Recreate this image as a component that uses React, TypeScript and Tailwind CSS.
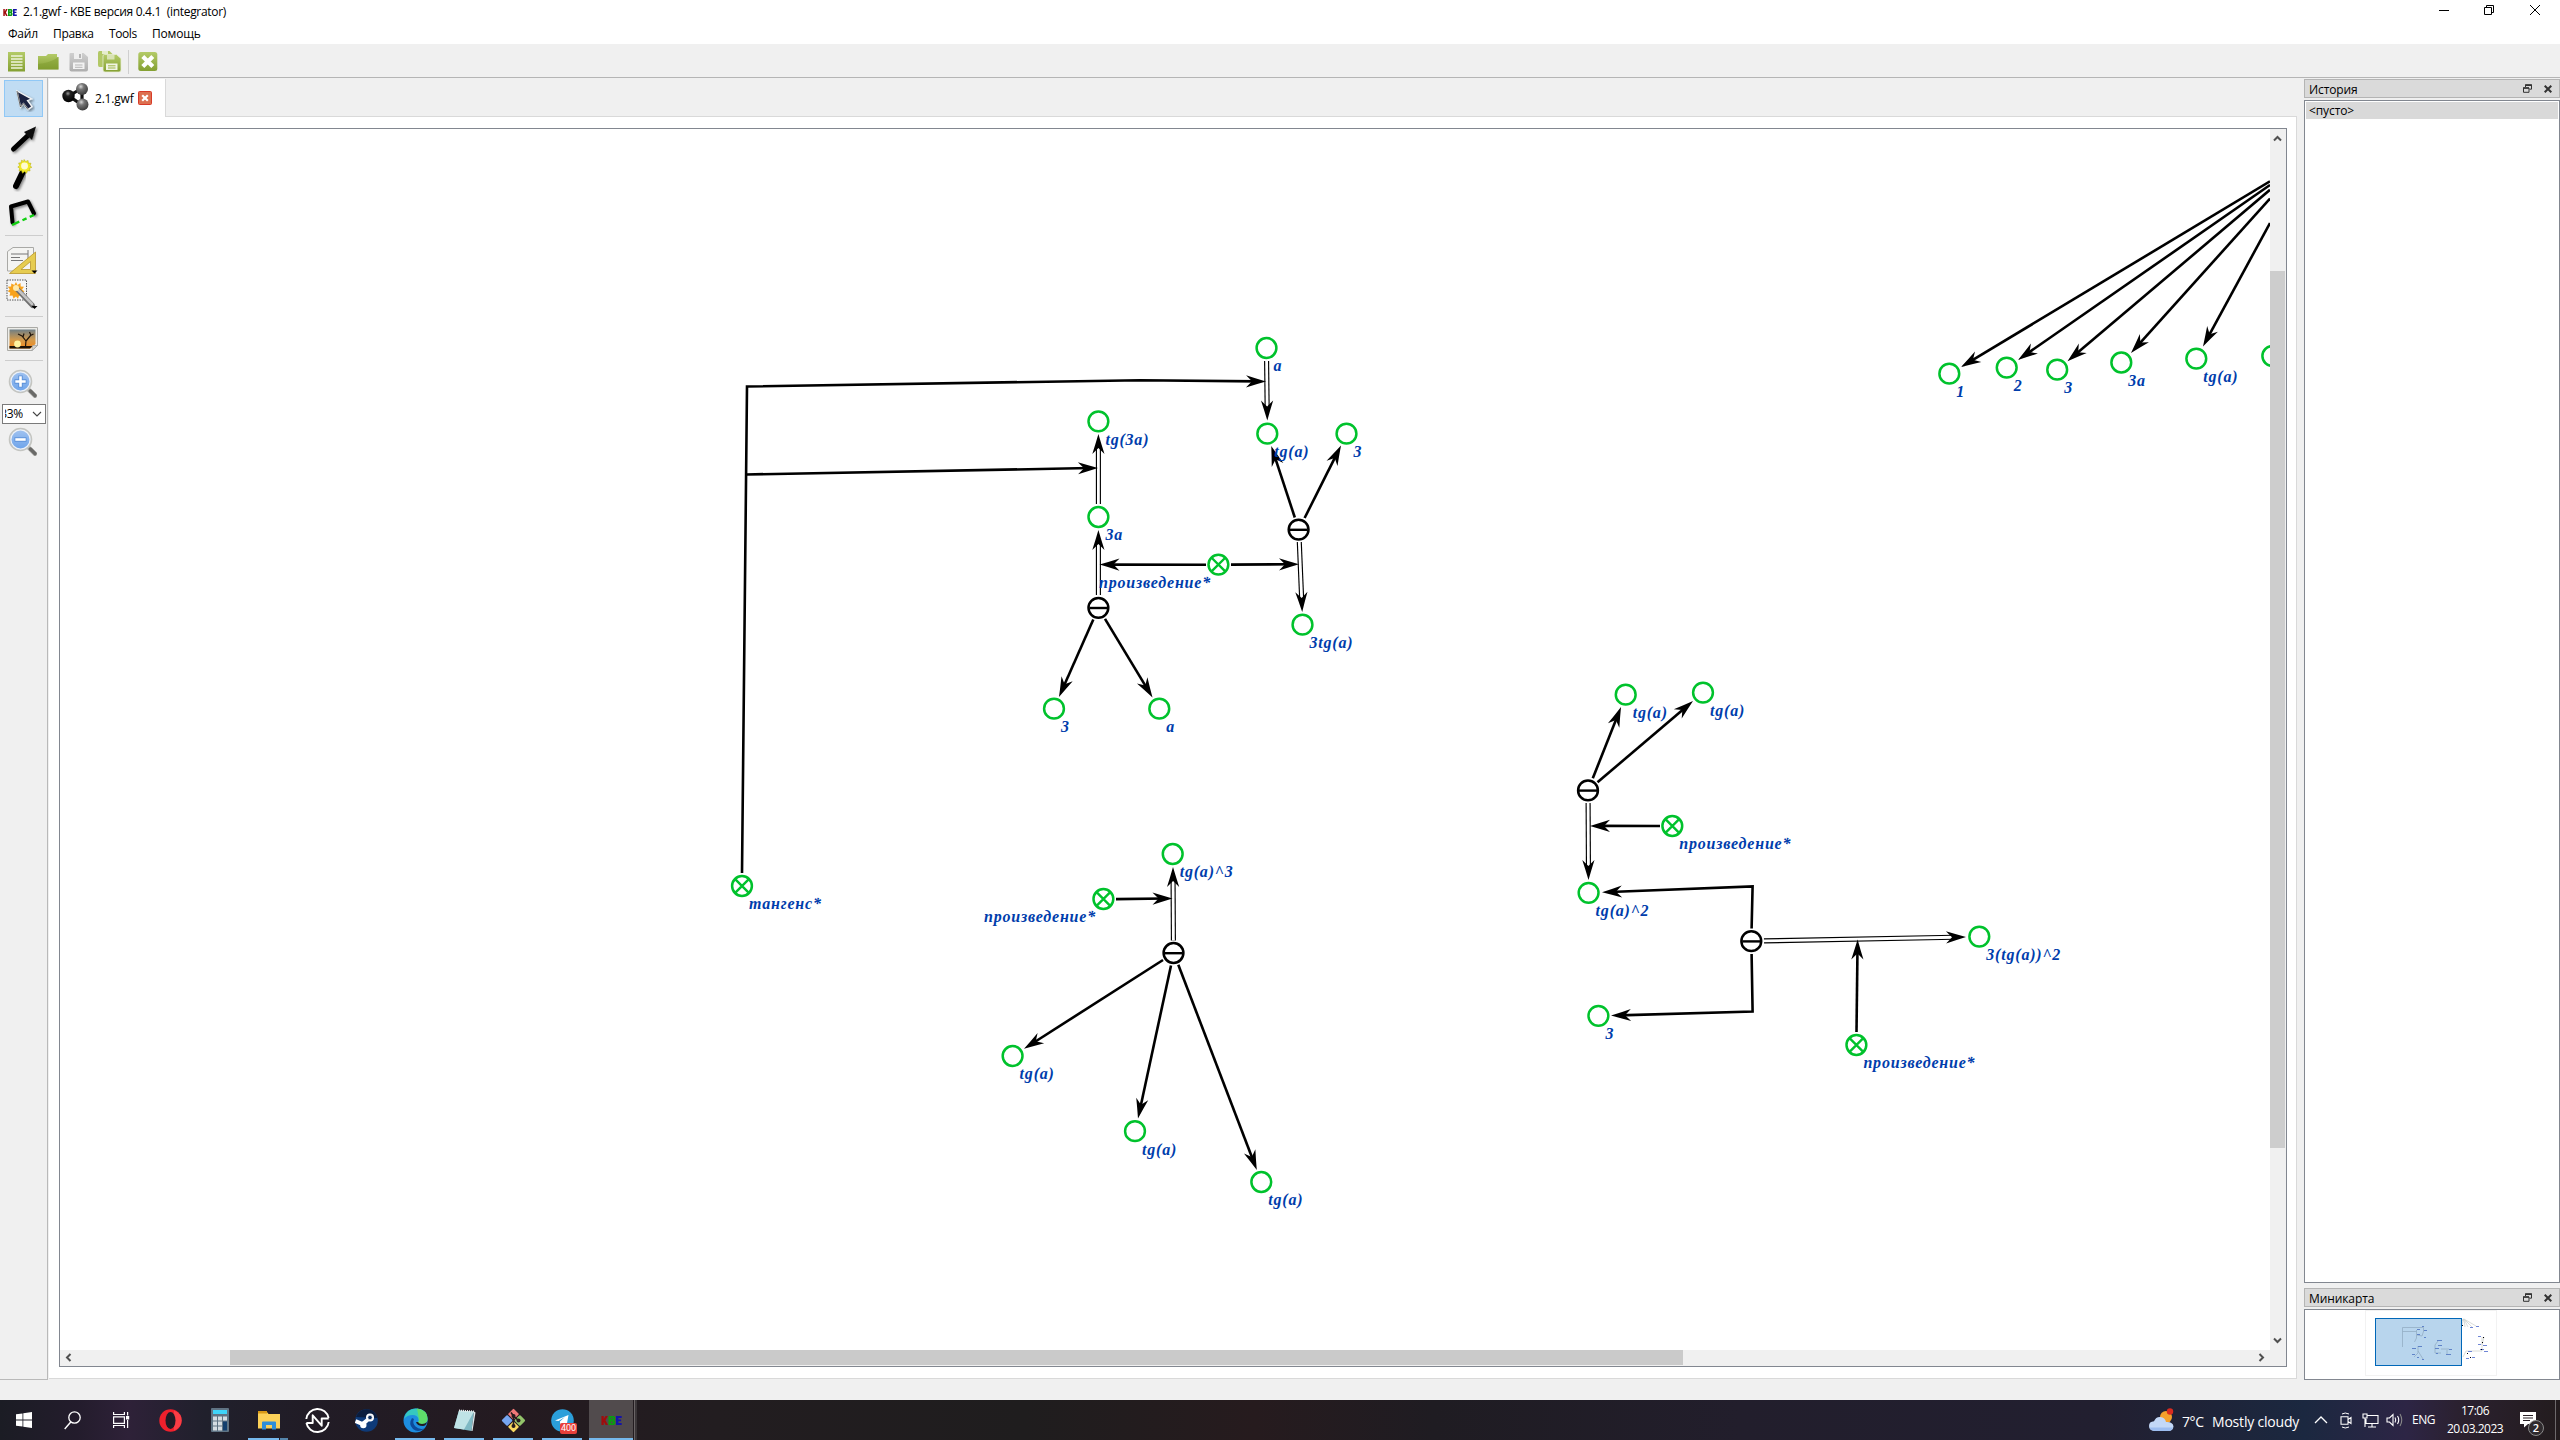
import React from "react";

type Pt = [number, number];

const UI = "font-['Open_Sans','Noto_Sans',sans-serif]";

/* ---------- Diagram data (canvas viewport origin is the window origin) ---------- */

type Kind = "node" | "relation" | "tuple";
interface GraphNode {
  x: number;
  y: number;
  kind: Kind;
  label?: string;
  left?: boolean;
}

const nodes: GraphNode[] = [
  { x: 1266.5, y: 348, kind: "node", label: "a" },
  { x: 1267.3, y: 433.7, kind: "node", label: "tg(a)" },
  { x: 1346.5, y: 433.7, kind: "node", label: "3" },
  { x: 1298.6, y: 529.6, kind: "tuple" },
  { x: 1302.5, y: 624.7, kind: "node", label: "3tg(a)" },
  { x: 1218.4, y: 564.6, kind: "relation", label: "произведение*", left: true },
  { x: 1098.4, y: 421.3, kind: "node", label: "tg(3a)" },
  { x: 1098.4, y: 517, kind: "node", label: "3a" },
  { x: 1098.4, y: 607.8, kind: "tuple" },
  { x: 1054, y: 708.7, kind: "node", label: "3" },
  { x: 1159.3, y: 708.7, kind: "node", label: "a" },
  { x: 742, y: 886, kind: "relation", label: "тангенс*" },
  { x: 1172.7, y: 854, kind: "node", label: "tg(a)^3" },
  { x: 1103.4, y: 899, kind: "relation", label: "произведение*", left: true },
  { x: 1173.5, y: 953, kind: "tuple" },
  { x: 1012.6, y: 1056, kind: "node", label: "tg(a)" },
  { x: 1135, y: 1131.2, kind: "node", label: "tg(a)" },
  { x: 1261.3, y: 1182, kind: "node", label: "tg(a)" },
  { x: 1625.7, y: 694.7, kind: "node", label: "tg(a)" },
  { x: 1703, y: 692.6, kind: "node", label: "tg(a)" },
  { x: 1588, y: 790.4, kind: "tuple" },
  { x: 1672.3, y: 826, kind: "relation", label: "произведение*" },
  { x: 1588.6, y: 892.8, kind: "node", label: "tg(a)^2" },
  { x: 1751.3, y: 941.2, kind: "tuple" },
  { x: 1979.3, y: 936.6, kind: "node", label: "3(tg(a))^2" },
  { x: 1598.4, y: 1015.8, kind: "node", label: "3" },
  { x: 1856.4, y: 1045, kind: "relation", label: "произведение*" },
  { x: 1949.3, y: 373.7, kind: "node", label: "1" },
  { x: 2006.7, y: 367.6, kind: "node", label: "2" },
  { x: 2057.2, y: 369.7, kind: "node", label: "3" },
  { x: 2121.3, y: 362.5, kind: "node", label: "3a" },
  { x: 2196.3, y: 358.6, kind: "node", label: "tg(a)" },
  { x: 2272.3, y: 356, kind: "node" },
];

/* The last point of every path carries the arrow head. */
const solid: Pt[][] = [
  [[742, 873], [747, 386.5], [1140, 380.2], [1266, 381.5]],
  [[746.3, 474.5], [1098, 467.9]],
  [[1206, 564.7], [1099.5, 564.6]],
  [[1231, 564.6], [1299, 564.2]],
  [[1294.8, 517.5], [1271.3, 446]],
  [[1304.6, 518], [1341, 445.5]],
  [[1093.3, 619.5], [1059, 697]],
  [[1105, 618.8], [1152.5, 697.5]],
  [[1116, 899.1], [1172.5, 898.4]],
  [[1163, 960], [1024, 1048.8]],
  [[1171, 965.5], [1138, 1118.5]],
  [[1178.3, 964.8], [1256.8, 1170]],
  [[1592.8, 778.3], [1621, 707]],
  [[1597.5, 782.3], [1693, 701]],
  [[1660, 826], [1590, 825.9]],
  [[1751.6, 928.5], [1752.6, 886.4], [1602, 892.3]],
  [[1751.6, 954], [1752.6, 1011.5], [1611, 1015.6]],
  [[1856.5, 1032], [1857.6, 939.5]],
  [[2270, 181.3], [1961, 367]],
  [[2270, 185], [2018, 360]],
  [[2270, 189.8], [2067.5, 361.2]],
  [[2270, 198.6], [2131, 353]],
  [[2270, 223], [2203, 346.5]],
];

const double: [Pt, Pt][] = [
  [[1266.6, 361], [1267.3, 420.5]],
  [[1098.4, 504], [1098.4, 434]],
  [[1098.4, 595], [1098.4, 530]],
  [[1299.3, 542], [1302.2, 612]],
  [[1173.4, 940.5], [1173, 867]],
  [[1588.1, 803], [1588.5, 880]],
  [[1764, 940.9], [1966, 937]],
];

function Head({ from, to }: { from: Pt; to: Pt }) {
  const angle = (Math.atan2(to[1] - from[1], to[0] - from[0]) * 180) / Math.PI;
  return (
    <path
      d="M0 0 Q-10 -2.9 -20 -6.1 L-14 0 L-20 6.1 Q-10 2.9 0 0Z"
      fill="#000"
      transform={`translate(${to[0]} ${to[1]}) rotate(${angle})`}
    />
  );
}

function shorten(from: Pt, to: Pt, by: number): Pt {
  const d = Math.hypot(to[0] - from[0], to[1] - from[1]);
  return [to[0] - ((to[0] - from[0]) * by) / d, to[1] - ((to[1] - from[1]) * by) / d];
}

function Diagram() {
  return (
    <svg className="block h-full w-full" viewBox="60 129 2210 1221" preserveAspectRatio="xMinYMin slice">
      {double.map(([a, b], i) => {
        const e = shorten(a, b, 12);
        return (
          <g key={i}>
            <line x1={a[0]} y1={a[1]} x2={e[0]} y2={e[1]} stroke="#000" strokeWidth="5.1" />
            <line x1={a[0]} y1={a[1]} x2={e[0]} y2={e[1]} stroke="#fff" strokeWidth="2.8" />
            <Head from={a} to={b} />
          </g>
        );
      })}
      {solid.map((pts, i) => {
        const tip = pts[pts.length - 1];
        const prev = pts[pts.length - 2];
        const line = [...pts.slice(0, -1), shorten(prev, tip, 8)];
        return (
          <g key={i}>
            <polyline points={line.map((p) => p.join(",")).join(" ")} fill="none" stroke="#000" strokeWidth="2.6" />
            <Head from={prev} to={tip} />
          </g>
        );
      })}
      {nodes.map((n, i) => {
        const c = n.kind === "tuple" ? "#000" : "#00c22c";
        return (
          <g key={i}>
            <circle cx={n.x} cy={n.y} r="9.9" fill="#fff" stroke={c} strokeWidth="2.5" />
            {n.kind === "tuple" && (
              <line x1={n.x - 9} y1={n.y + 0.2} x2={n.x + 9} y2={n.y + 0.2} stroke={c} strokeWidth="2.4" />
            )}
            {n.kind === "relation" && (
              <path
                d={`M${n.x - 6.6} ${n.y - 6.6}l13.2 13.2M${n.x + 6.6} ${n.y - 6.6}l-13.2 13.2`}
                stroke={c}
                strokeWidth="2.4"
              />
            )}
            {n.label && (
              <text
                x={n.left ? n.x - 119.4 : n.x + 7}
                y={n.y + 23.3}
                className="fill-[#003dac] font-['Liberation_Serif',serif] text-[16px] font-bold italic tracking-[0.8px]"
              >
                {n.label}
              </text>
            )}
          </g>
        );
      })}
    </svg>
  );
}

/* ---------- Small shared pieces ---------- */

function KbeMark({ className }: { className: string }) {
  return (
    <svg viewBox="0 0 14 7" className={className} preserveAspectRatio="none">
      <path d="M0.3 0h1.5v2.4L3 0h1.6L3 3.4 4.7 7H3.1L1.8 4.4V7H.3z" fill="#a00c0c" />
      <path d="M5 0h3.4l1 1v1.6l-.6.8.7.9V6l-1 1H5zM6.6 1.4v1.2h1.1V1.4zM6.6 4.2v1.4h1.2V4.2z" fill="#0c9a12" fillRule="evenodd" />
      <path d="M10 0h3.8v1.5h-2.2v1.2h1.8v1.4h-1.8v1.4h2.2V7H10z" fill="#1414a8" />
    </svg>
  );
}

function GreenDefs() {
  return (
    <svg className="absolute h-0 w-0">
      <defs>
        <linearGradient id="green" x1="0" y1="0" x2="0" y2="1">
          <stop offset="0" stopColor="#b4cb68" />
          <stop offset="1" stopColor="#84a032" />
        </linearGradient>
        <linearGradient id="gray" x1="0" y1="0" x2="0" y2="1">
          <stop offset="0" stopColor="#cfcfcf" />
          <stop offset="1" stopColor="#aeaeae" />
        </linearGradient>
        <linearGradient id="lens" x1="0" y1="0" x2="0" y2="1">
          <stop offset="0" stopColor="#a3c4f0" />
          <stop offset="1" stopColor="#6ba2ea" />
        </linearGradient>
        <linearGradient id="sunset" x1="0" y1="0" x2="0" y2="1">
          <stop offset="0" stopColor="#6f7f86" />
          <stop offset="0.55" stopColor="#d49a4a" />
          <stop offset="1" stopColor="#f58a1c" />
        </linearGradient>
        <radialGradient id="ball" cx="0.4" cy="0.3" r="0.7">
          <stop offset="0" stopColor="#d8d8d8" />
          <stop offset="0.35" stopColor="#777" />
          <stop offset="1" stopColor="#3c3c3c" />
        </radialGradient>
        <radialGradient id="darkBall" cx="0.45" cy="0.3" r="0.7">
          <stop offset="0" stopColor="#999" />
          <stop offset="0.3" stopColor="#222" />
          <stop offset="1" stopColor="#000" />
        </radialGradient>
        <filter id="drop" x="-40%" y="-40%" width="180%" height="180%">
          <feDropShadow dx="1.5" dy="1.5" stdDeviation="1.2" floodOpacity="0.45" />
        </filter>
      </defs>
    </svg>
  );
}

/* ---------- Title, menu, toolbars ---------- */

function TitleBar() {
  return (
    <div className="flex h-6 items-center bg-white">
      <KbeMark className="ml-[3px] h-[7px] w-[14px]" />
      <span className="ml-[6px] w-[260px] text-[12px] tracking-[-0.3px] whitespace-pre text-black">
        2.1.gwf - KBE версия 0.4.1  (integrator)
      </span>
      <div className="ml-auto flex h-full items-start pt-[4px]">
        <svg width="12" height="12" className="mr-[33px]"><path d="M1 6.5h10" stroke="#000" /></svg>
        <svg width="12" height="12" className="mr-[34px]">
          <path d="M1.5 3.5h7v7h-7zM3.5 3.5v-2h7v7h-2" fill="none" stroke="#000" />
        </svg>
        <svg width="12" height="12" className="mr-[19px]">
          <path d="M1 1l10 10M11 1L1 11" stroke="#000" />
        </svg>
      </div>
    </div>
  );
}

function MenuBar() {
  return (
    <div className="flex h-[21px] items-center border-b border-[#f0f0f0] pl-2 text-[12px] text-black">
      <span className="w-[45px] tracking-[-0.2px]">Файл</span>
      <span className="w-[56px] tracking-[-0.3px]">Правка</span>
      <span className="w-[43px] tracking-[-0.4px]">Tools</span>
      <span className="w-[60px] tracking-[-0.2px]">Помощь</span>
    </div>
  );
}

function MainToolbar() {
  return (
    <div className="flex h-[34px] items-center border-b border-[#b5b5b5] pt-[2px] pl-[8px]">
      <svg width="18" height="20" viewBox="0 0 18 20">
        <path d="M0 0h17v19.500H0z" fill="url(#green)" />
        <path d="M3 4h11.500M3 7h11.500M3 10h11.500M3 13h11.500M3 16h11.500" stroke="#eef4dc" strokeWidth="1.4" />
      </svg>
      <svg width="21" height="16" viewBox="0 0 21 16" className="ml-[12px]">
        <path d="M0 2h8l2-2h9v3h1.500v12.500H0z" fill="url(#green)" />
        <path d="M0 15.500V10Q12 9 20.500 3v12.500z" fill="#7c9a2c" opacity="0.45" />
      </svg>
      <svg width="20" height="20" viewBox="0 0 20 20" className="ml-[10px]">
        <path d="M1.500 1h13l4.500 4v12.500q0 2-2 2H2.500q-2 0-2-2V2q0-1 1-1z" fill="url(#gray)" />
        <path d="M5 1h8v6H5z" fill="#efefef" />
        <path d="M10 2h2v4h-2z" fill="#b5b5b5" />
        <path d="M4 10.500h11.500V17H4z" fill="#f2f2f2" />
        <path d="M6 13h7.500M6 15.300h7.500" stroke="#b5b5b5" />
      </svg>
      <svg width="24" height="22" viewBox="0 0 24 22" className="ml-[9px]">
        <path d="M1.500 0h10l3 3v13H1.500q-1.500 0-1.500-2V2q0-2 1.500-2z" fill="#b2c866" />
        <path d="M4 0h6v3H4z" fill="#e6edcc" />
        <path d="M6.500 3.500h12l4.500 4v11.500q0 2-2 2H7q-2 0-2-2V5q0-1.500 1.500-1.500z" fill="url(#green)" stroke="#e8eed6" strokeWidth="0.8" />
        <path d="M9 4h7.500v4.500H9z" fill="#d9e3b4" />
        <path d="M8 12.500h11.500V19H8z" fill="#f1f5e4" />
        <path d="M10 14.800h7.500M10 17h7.500" stroke="#9db548" />
      </svg>
      <div className="ml-[6px] h-[24px] w-px bg-[#cfcfcf]" />
      <svg width="20" height="19" viewBox="0 0 20 19" className="ml-[9px]">
        <rect x="0.300" width="19" height="19" rx="2.500" fill="url(#green)" />
        <path d="M4.800 4.500l10 10M14.800 4.500l-10 10" stroke="#fff" strokeWidth="4.200" />
      </svg>
    </div>
  );
}

function Rule({ className }: { className: string }) {
  return <div className={`ml-[5px] h-px w-[38px] bg-[#cdcdcd] ${className}`} />;
}

function Lens({ plus, className }: { plus?: boolean; className: string }) {
  return (
    <svg width="32" height="31" viewBox="0 0 32 31" className={className}>
      <path d="M20 20l7 7" stroke="#a0a09c" strokeWidth="4" strokeLinecap="round" />
      <path d="M22.500 22l4.500 4.500" stroke="#6a6a68" strokeWidth="3.400" strokeLinecap="round" />
      <circle cx="12.500" cy="12.500" r="10.800" fill="url(#lens)" stroke="#c4c5c1" strokeWidth="2" />
      <circle cx="12.500" cy="12.500" r="9.600" fill="none" stroke="#eef2f8" strokeWidth="1.200" />
      <path d={plus ? "M6.500 12.500h12M12.500 6.500v12" : "M6.500 12.500h12"} stroke="#5b90d8" strokeWidth="4.400" />
      <path d={plus ? "M7.300 12.500h10.400M12.500 7.300v10.400" : "M7.300 12.500h10.400"} stroke="#fff" strokeWidth="2.600" />
    </svg>
  );
}

function ToolPalette() {
  return (
    <div className="flex h-[1302px] w-[48px] shrink-0 flex-col border-r border-b border-[#b9b9b9] pt-[2px]">
      <div className="ml-[4px] flex h-[37px] w-[39px] items-center justify-center border border-[#90c8f6] bg-[#c0dcf3]">
        <svg width="22" height="24" viewBox="0 0 22 24" className="mt-[2px]">
          <path d="M4 3l3.500 16 3-3.500 4.500 6 4-3-4.500-6 4-1.500z" fill="#1b2340" stroke="#f4f4f4" strokeWidth="1.300" filter="url(#drop)" />
          <path d="M4 3l3.500 16 3-3.500 4.500 6" fill="none" stroke="#2a2a2a" strokeWidth="0.700" />
        </svg>
      </div>
      <svg width="32" height="32" viewBox="0 0 32 32" className="mt-[6px] ml-[8px]">
        <path d="M5.500 26L21 11.500" stroke="#000" strokeWidth="5" strokeLinecap="round" filter="url(#drop)" />
        <path d="M28 3.500L16 9l8 8z" fill="#111" filter="url(#drop)" />
      </svg>
      <svg width="32" height="34" viewBox="0 0 32 34" className="mt-[3px] ml-[8px]">
        <path d="M8 28L15 13.500" stroke="#000" strokeWidth="6" strokeLinecap="round" filter="url(#drop)" />
        <g transform="translate(3 1.500) scale(0.82)">
          <path d="M16 0l1.800 2.600 3-1.400.4 3.200 3.200.2-1.200 3 2.200 1.900-2.900 1.300.8 3.100-3.200-.2-1.100 3-2.500-2-2.500 2-1-3-3.200.2.800-3.100-2.300-1.600 2.200-1.900-1.200-3 3.200-.2.300-3.200 3 1.400z" fill="#f2ea25" stroke="#b8b012" strokeWidth="0.700" />
          <circle cx="16.500" cy="8" r="4.200" fill="#fffbd0" />
        </g>
      </svg>
      <svg width="34" height="32" viewBox="0 0 34 32" className="mt-[5px] ml-[6px]">
        <path d="M6.500 25.500L5 9.500 22 4.500l6 12" fill="none" stroke="#000" strokeWidth="4" strokeLinejoin="round" strokeLinecap="round" filter="url(#drop)" />
        <path d="M6 28l22-10" stroke="#12d012" strokeWidth="2.400" strokeDasharray="8 3.500 4.500 3.500" />
      </svg>
      <Rule className="mt-[6px]" />
      <svg width="32" height="30" viewBox="0 0 32 30" className="mt-[10px] ml-[7px]">
        <path d="M0.500 5.500L6 1.500h20.500v23.500H0.500z" fill="#f4f4f2" stroke="#a9a9a6" />
        <path d="M4 8h17M4 11.500h9M4 14.500h12M21 4v10" stroke="#777" strokeWidth="1" />
        <path fillRule="evenodd" d="M2.500 27.500L28.500 6v21.500zM14 23.500h9.500v-8z" fill="#e6cc50" stroke="#b8962a" strokeWidth="0.800" />
        <path d="M24.500 24.500h6l-3 3z" fill="#000" />
      </svg>
      <svg width="34" height="32" viewBox="0 0 34 32" className="mt-[3px] ml-[6px]">
        <rect x="1" y="1" width="19.500" height="20" fill="#f6f6f6" stroke="#555" strokeDasharray="1.500 1" />
        <path d="M10 3l1.500 3 3-2 .2 3.500 3.300.3-2 2.700 2.500 2-3 1.500.8 3-3.300-.3-1 3L10 17.500l-2.500 2-1-3-3 .3.800-3-2.500-1.500 2-2-2-2.500 3.300-.3.200-3 3 1.500z" fill="#f8a21c" />
        <path d="M10 9l16.500 17.500" stroke="#707070" strokeWidth="5" strokeLinecap="round" />
        <path d="M10 8.500L26 25" stroke="#c4c4c4" strokeWidth="2.600" strokeLinecap="round" />
        <circle cx="10" cy="9" r="3" fill="#ffe9a8" />
        <path d="M25.500 27h6l-3 3z" fill="#000" />
      </svg>
      <Rule className="mt-[5px]" />
      <svg width="32" height="25" viewBox="0 0 32 25" className="mt-[10px] ml-[7px]">
        <path d="M0.500 0.500h30v18l-5.500 5H0.500z" fill="#ecece8" stroke="#aaaaa6" />
        <path d="M2.500 2.500h26V17l-5 4.500h-21z" fill="url(#sunset)" />
        <path d="M2.500 19h23l-2.500 2.500H2.500z" fill="#1c1208" />
        <circle cx="10.500" cy="17" r="3.400" fill="#fff3a0" />
        <path d="M18.500 19.500l.5-6M19 14l-4-5-4-2M16 10l1-3.500M19 14l4.500-5.500 3-1.500M24 8.500L22.500 5" fill="none" stroke="#21160c" strokeWidth="1.200" />
        <path d="M25 23.500l.5-5 5 0z" fill="#d5d5d0" stroke="#999" strokeWidth="0.600" />
      </svg>
      <Rule className="mt-[8px]" />
      <Lens plus className="mt-[8px] ml-[8px]" />
      <div className="mt-[4px] ml-[2px] flex h-[20px] w-[44px] items-center overflow-hidden border border-[#7a7a7a] bg-white">
        <span className="ml-[2px] flex w-[18px] justify-end overflow-hidden text-[12px] tracking-[-0.3px] text-black">33%</span>
        <svg width="10" height="6" className="ml-[9px]"><path d="M1 1l4 4 4-4" fill="none" stroke="#444" strokeWidth="1.100" /></svg>
      </div>
      <Lens className="mt-[3px] ml-[8px]" />
    </div>
  );
}

/* ---------- Work area ---------- */

function DocumentTab() {
  return (
    <div className="flex h-[38px] items-stretch">
      <div className="flex w-[117px] items-center border-r border-[#d9d9d9] bg-white pl-[12px]">
        <svg width="30" height="30" viewBox="0 0 30 30" className="mt-[-3px]">
          <path d="M8 14L21 6v17z" fill="none" stroke="#111" strokeWidth="3.200" />
          <circle cx="21" cy="7" r="6" fill="url(#ball)" />
          <circle cx="21.500" cy="22.500" r="6" fill="url(#ball)" />
          <circle cx="7.500" cy="14" r="6.200" fill="url(#darkBall)" />
        </svg>
        <span className="mt-[2px] ml-[4px] w-[40px] text-[12px] tracking-[-0.2px] whitespace-nowrap text-black">2.1.gwf</span>
        <svg width="14" height="14" viewBox="0 0 14 14" className="ml-[3px]">
          <rect x="0.500" y="0.500" width="13" height="13" rx="1" fill="#dc7050" stroke="#d83a28" />
          <path d="M4.200 4.200l5.600 5.600M9.800 4.200L4.200 9.800" stroke="#fff" strokeWidth="2.200" />
        </svg>
      </div>
      <div className="flex-1 border-b border-[#d9d9d9]" />
    </div>
  );
}

function Chevron({ d }: { d: string }) {
  return (
    <svg width="9" height="9" viewBox="0 0 9 9">
      <path d={d} fill="none" stroke="#505050" strokeWidth="2" />
    </svg>
  );
}

function Workspace() {
  return (
    <div className="flex h-[1300px] w-[2249px] flex-col pl-px">
      <DocumentTab />
      <div className="flex flex-1 border-r border-b border-[#d9d9d9] bg-white pt-[11px] pr-[10px] pb-[11px] pl-[10px]">
        <div className="flex w-[2228px] flex-col border border-[#828790]">
          <div className="flex h-[1221px]">
            <div className="h-[1221px] w-[2210px] overflow-hidden bg-white">
              <Diagram />
            </div>
            <div className="flex w-[16px] flex-col items-center bg-[#f0f0f0] pr-px">
              <div className="flex h-[142px] pt-[5px]"><Chevron d="M1 6.500L4.500 3 8 6.500" /></div>
              <div className="h-[877px] w-[15px] bg-[#cdcdcd]" />
              <div className="mt-auto pb-[5px]"><Chevron d="M1 2.500L4.500 6 8 2.500" /></div>
            </div>
          </div>
          <div className="flex h-[16px] items-center bg-[#f0f0f0] pb-px">
            <div className="flex w-[170px] pl-[4px]"><Chevron d="M6.500 1L3 4.500 6.500 8" /></div>
            <div className="h-[15px] w-[1453px] bg-[#cacaca]" />
            <div className="ml-auto pr-[20px]"><Chevron d="M2.500 1L6 4.500 2.500 8" /></div>
          </div>
        </div>
      </div>
    </div>
  );
}

function DockTitle({ title }: { title: string }) {
  return (
    <div className="flex h-[19px] shrink-0 items-center border border-[#b4b4b4] bg-[#dadada] pl-[4px] text-[12px] text-black">
      <span className="mt-[2px] leading-[17px] tracking-[-0.1px]">{title}</span>
      <svg width="9" height="9" viewBox="0 0 9 9" className="ml-auto">
        <path d="M2.500 3V0.800h6v4.400H6.500M0.500 4h5.500v4.300H0.500z" fill="none" stroke="#333" />
        <path d="M2 1.200h7M0 4h6" stroke="#333" strokeWidth="1.600" />
      </svg>
      <svg width="8" height="8" viewBox="0 0 8 8" className="mr-[7px] ml-[12px]">
        <path d="M0.700 0.700l6.600 6.600M7.300 0.700L0.700 7.300" stroke="#333" strokeWidth="2" />
      </svg>
    </div>
  );
}

function MiniMap() {
  return (
    <svg width="132" height="66" viewBox="2365 1310 132 66" className="ml-[60px] block">
      <rect x="2365.500" y="1310.500" width="131" height="65" fill="none" stroke="#f2f2f2" />
      <g stroke="#d0d4d0" strokeWidth="0.800" fill="none">
        <path d="M2464 1319l-14 8M2464 1319l-10 8M2464 1319l-7 8M2464 1319l-3 8M2464 1319l1 8M2464 1319l4 8M2464 1319l8 8M2464 1319l12 7" />
        <path d="M2482 1337v14h-16l-3 6M2484 1337l-2 8" />
      </g>
      <g fill="#6f86d6">
        <path d="M2476 1326h3v1h-3zM2470 1327h3v1h-3zM2478 1336h3v1h-3zM2478 1344h3v1h-3zM2483 1345h4v1h-4zM2480 1349h4v1h-4zM2484 1351h4v1h-4zM2468 1351h4v1h-4zM2472 1357h3v1h-3zM2466 1358h3v1h-3z" />
      </g>
      <path d="M2462 1325h1v1h-1zM2483 1337h1v1h-1zM2482 1342h1v1h-1zM2481 1349h1v1h-1zM2467 1353h1v1h-1zM2470 1357h1v1h-1z" fill="#000" />
      <rect x="2375.500" y="1318.500" width="86" height="47" fill="#b8d5ed" stroke="#0067b8" />
      <g stroke="#93adc4" strokeWidth="0.800" fill="none">
        <path d="M2402.500 1347v-19.500h21v4M2402.500 1331.500h14M2416.500 1330v8l-2 4M2424 1330l-2 6-5-1" />
        <path d="M2418 1346v7l-4 4M2418 1351l5 8M2438 1341l-3 4v8h6M2441 1349h8M2447 1350v4" />
      </g>
      <g fill="#5f83c8">
        <path d="M2417 1329h3v1h-3zM2422 1326h2v1h-2zM2424 1330h3v1h-3zM2417 1334h3v1h-3zM2424 1337h2v1h-2zM2418 1346h4v1h-4zM2412 1348h4v1h-4zM2412 1354h3v1h-3zM2417 1357h2v1h-2zM2422 1359h2v1h-2zM2437 1340h5v1h-5zM2438 1345h4v1h-4zM2435 1348h4v1h-4zM2449 1349h3v1h-3zM2446 1354h5v1h-5zM2436 1353h2v1h-2z" />
      </g>
    </svg>
  );
}

function Docks() {
  return (
    <div className="ml-[7px] flex h-[1301px] w-[256px] flex-col">
      <DockTitle title="История" />
      <div className="mt-[2px] h-[1183px] border border-[#828790] bg-white p-px">
        <div className="flex h-[17px] items-center bg-[#d9d9d9] pl-[3px] text-[12px] tracking-[-0.1px] text-black">&lt;пусто&gt;</div>
      </div>
      <div className="mt-[5px] flex flex-col">
        <DockTitle title="Миникарта" />
        <div className="mt-[2px] h-[71px] border border-[#828790] bg-white">
          <MiniMap />
        </div>
      </div>
    </div>
  );
}

/* ---------- Taskbar ---------- */

function Slot({ children, open, stacked, active, first }: { children: React.ReactNode; open?: boolean; stacked?: boolean; active?: boolean; first?: boolean }) {
  return (
    <div
      className={`relative flex h-10 shrink-0 items-center justify-center ${first ? "w-[48px]" : active ? "mr-px ml-[2px] w-[44px] bg-[#514b4d]" : "w-[49px]"}`}
    >
      {children}
      {open && !stacked && (
        <div className={`absolute bottom-0 h-[2px] bg-[#76b9ed] ${active ? "left-0 w-[44px]" : "left-[4px] w-[40px]"}`} />
      )}
      {stacked && (
        <div className="absolute bottom-0 left-[4px] flex h-[2px] w-[40px]">
          <div className="w-[31px] bg-[#76b9ed]" />
          <div className="ml-px w-[8px] bg-[#5585ab]" />
        </div>
      )}
    </div>
  );
}

function Taskbar() {
  return (
    <div className="flex h-10 items-center bg-[linear-gradient(90deg,#1b1c24_0%,#231c2c_3%,#2e2138_5%,#20202c_8%,#211c26_12%,#241a20_20%,#221d20_28%,#1f1d1e_40%,#261b1e_49%,#1f1c22_56%,#221e2c_68%,#221f30_82%,#1b2840_90%,#2d2545_94%,#2b2130_96%,#231c1e_100%)] text-white">
      <Slot first>
        <svg width="16" height="16" viewBox="0 0 16 16">
          <path d="M0 2.300L6.500 1.400V7.600H0zM7.300 1.300L16 0V7.600H7.300zM0 8.400H6.500V14.600L0 13.700zM7.300 8.400H16V16L7.300 14.700z" fill="#fff" />
        </svg>
      </Slot>
      <Slot>
        <svg width="17" height="19" viewBox="0 0 17 19">
          <circle cx="10.500" cy="6.500" r="5.700" fill="none" stroke="#fff" strokeWidth="1.300" />
          <path d="M6.800 11L0.700 18" stroke="#fff" strokeWidth="1.400" />
        </svg>
      </Slot>
      <Slot>
        <svg width="17" height="16" viewBox="0 0 17 16">
          <path d="M0.600 0v2.500h10.800V0M0.600 16v-2.500h10.800V16M0.600 4.800h10.800v6.500H0.600z" fill="none" stroke="#fff" strokeWidth="1.200" />
          <path d="M14.600 0v3.500M14.600 8v8" stroke="#fff" strokeWidth="1.200" />
          <path d="M13 4h3.200v3.500H13z" fill="#fff" />
        </svg>
      </Slot>
      <Slot>
        <svg width="23" height="23" viewBox="0 0 23 23">
          <ellipse cx="11.500" cy="11.500" rx="11.200" ry="11.300" fill="#f0202c" />
          <path d="M15 1.500q8 3 7.700 10T15 21.500z" fill="#ff4a50" opacity="0.700" />
          <ellipse cx="11.500" cy="11.500" rx="5" ry="8.400" fill="#211b26" />
        </svg>
      </Slot>
      <Slot>
        <svg width="18" height="24" viewBox="0 0 18 24">
          <rect width="18" height="24" rx="1" fill="#5f7383" />
          <rect x="2" y="2" width="14" height="4" fill="#3fd4f8" />
          <path d="M2 8.500h4v4H2zM7 8.500h4v4H7zM12 8.500h4v4h-4zM2 13.500h4v4H2zM7 13.500h4v4H7zM2 18.500h4v4H2zM7 18.500h4v4H7z" fill="#d5dde2" />
          <path d="M12 13.500h4v9h-4z" fill="#123f6e" />
        </svg>
      </Slot>
      <Slot stacked>
        <svg width="22" height="19" viewBox="0 0 22 19">
          <path d="M0 1h9l1.500 2H22v14.500H0z" fill="#fcd158" />
          <path d="M0 0h9v2.500H0z" fill="#d99a17" />
          <path d="M4 18.500V11.500q0-1 1-1h12q1 0 1 1v7h-4V14H8v4.500z" fill="#2f8ed8" />
        </svg>
      </Slot>
      <Slot>
        <svg width="25" height="25" viewBox="0 0 25 25">
          <path d="M1.300 11A11.300 11.300 0 0 1 23.600 10M23.700 14A11.300 11.300 0 0 1 1.400 15" fill="none" stroke="#fff" strokeWidth="1.900" />
          <path d="M1.400 15h6.300V7.300l9 10.400V10.500h7" fill="none" stroke="#fff" strokeWidth="1.900" strokeLinejoin="round" />
        </svg>
      </Slot>
      <Slot>
        <svg width="23" height="23" viewBox="0 0 23 23">
          <circle cx="11.500" cy="11.500" r="11.300" fill="#0e3a78" />
          <path d="M1 8Q4 0 12 .200 20 1 22.500 9z" fill="#0b1d3d" />
          <path d="M0.500 12l7 3 5-4" fill="none" stroke="#fff" strokeWidth="4" />
          <circle cx="15" cy="8.500" r="4" fill="#fff" />
          <circle cx="15" cy="8.500" r="2.200" fill="#0e3060" stroke="#fff" strokeWidth="0.600" />
          <circle cx="8.300" cy="16" r="3.200" fill="#fff" />
        </svg>
      </Slot>
      <Slot open>
        <svg width="25" height="25" viewBox="0 0 25 25">
          <circle cx="12.500" cy="12.500" r="12" fill="#1d8ee0" />
          <path d="M1 11Q3 .500 13 .500 24.500 1 24.500 11q0 5-6 5-3.500 0-3.500-2 1-1 .500-3-1-4-6-4Q4 7 1 11z" fill="#35c8c0" />
          <path d="M14 .600Q24.500 2 24.500 11q0 5-6 5-3.500 0-3.500-2 1.500-1 .800-4z" fill="#5fdc6a" />
          <path d="M9 10q-4 6 1 11 5 4 12-.500-6 1.500-9.500-2T11 11z" fill="#0c4a9a" />
          <path d="M15 14q1 2 4 2t5-2q-1 4-4 4-6 0-7-4z" fill="#211b22" />
        </svg>
      </Slot>
      <Slot open>
        <svg width="23" height="23" viewBox="0 0 23 23">
          <path d="M6 1.500L21 2.500 18.500 22 1 19z" fill="#7fb9c4" />
          <path d="M6 1.500L21 2.500 11 20.500 1 19z" fill="#bfe3e6" />
          <path d="M21 2.500l1.500 1L19.500 22h-1z" fill="#dfe7ea" />
          <path d="M6 1.500l15 1" stroke="#e9e9e9" strokeWidth="2" strokeDasharray="1 1" />
        </svg>
      </Slot>
      <Slot open>
        <svg width="25" height="25" viewBox="0 0 25 25">
          <g transform="rotate(45 12.500 12.500)">
            <rect x="4" y="4" width="8" height="8" rx="1" fill="#f07878" />
            <rect x="13" y="4" width="8" height="8" rx="1" fill="#93c46a" />
            <rect x="4" y="13" width="8" height="8" rx="1" fill="#76a6f0" />
            <rect x="13" y="13" width="8" height="8" rx="1" fill="#f8d860" />
          </g>
          <path d="M10 4.500l2.500 3.500v11M12.500 8l5.500 5" stroke="#241b1e" strokeWidth="1.600" fill="none" />
          <circle cx="12.500" cy="8" r="2" fill="#241b1e" />
          <circle cx="12.500" cy="18" r="2" fill="#241b1e" />
          <circle cx="17.500" cy="12.500" r="2" fill="#241b1e" />
        </svg>
      </Slot>
      <Slot open>
        <svg width="23" height="23" viewBox="0 0 23 23">
          <circle cx="11.500" cy="11.500" r="11.300" fill="#2b9fda" />
          <path d="M4 11.500L17.500 6 15.500 17l-4-3-2 2-.600-3.500 5-4.500-6.400 4z" fill="#fff" />
        </svg>
        <span className="absolute top-[23px] left-[22px] flex h-[11px] w-[17px] items-center justify-center rounded-[2px] bg-[#e8403a] font-['Roboto',sans-serif] text-[9px] leading-none">
          400
        </span>
      </Slot>
      <Slot open active>
        <KbeMark className="h-[9px] w-[21px]" />
      </Slot>
      <div className="h-10 w-[3px] border-l border-[#6a6466] bg-[#3a3538]" />

      <div className="ml-auto flex h-10 items-center text-[14px]">
        <svg width="25" height="24" viewBox="0 0 25 24">
          <circle cx="17" cy="9" r="6" fill="#f5a12c" />
          <circle cx="21" cy="3.500" r="3.200" fill="#d92c20" />
          <path d="M5.500 23q-5.500-.500-5.500-5t5-4.800Q7 8.500 11.500 9t5.500 5q7-.500 7.500 4.500-.500 4-4.500 4.500z" fill="#c3d8f7" />
          <path d="M0.500 19.500h23.500q-1 3.300-4 3.500H5.500q-4-.500-5-3.500z" fill="#9dbdf0" />
        </svg>
        <span className="mt-[2px] ml-[8px] w-[30px] tracking-[-0.4px]">7°C</span>
        <span className="mt-[2px] w-[91px] tracking-[-0.200px] whitespace-nowrap">Mostly cloudy</span>
        <svg width="14" height="8" viewBox="0 0 14 8" className="ml-[11px]"><path d="M1 7l6-6 6 6" fill="none" stroke="#fff" strokeWidth="1.300" /></svg>
        <svg width="12" height="17" viewBox="0 0 12 17" className="ml-[12px]">
          <path d="M1 4.800h7v7.400H1zM8 7.500l3-2v6l-3-2" fill="none" stroke="#fff" strokeWidth="1.100" />
          <path d="M2 2Q5 0 9 2M2 15q3 2 7 0" fill="none" stroke="#fff" />
        </svg>
        <svg width="17" height="15" viewBox="0 0 17 15" className="ml-[10px]">
          <path d="M5 2.500h11v8H4V6M10 10.500v3M6 14h8M1 1h4v4H1zM3 5v9" fill="none" stroke="#fff" strokeWidth="1.100" />
        </svg>
        <svg width="17" height="14" viewBox="0 0 17 14" className="ml-[7px]">
          <path d="M1 5h2.500L7 1.500v11L3.500 9H1z" fill="none" stroke="#fff" strokeWidth="1.100" />
          <path d="M9 4.500q1.500 2.500 0 5M11.500 3q2.500 4 0 8" fill="none" stroke="#fff" strokeWidth="1.100" />
          <path d="M14 1q3.500 6 0 12" fill="none" stroke="#888" strokeWidth="1.100" />
        </svg>
        <span className="ml-[9px] w-[24px] text-[12px] tracking-[-0.500px]">ENG</span>
        <div className="ml-[12px] flex w-[54px] flex-col items-center text-[12px] leading-[18px] tracking-[-0.500px]">
          <span>17:06</span>
          <span>20.03.2023</span>
        </div>
        <div className="relative ml-[18px] h-[17px] w-[17px]">
          <svg width="17" height="17" viewBox="0 0 17 17">
            <path d="M0 0h16v12H8l-4 3.500V12H0z" fill="#fff" />
            <path d="M3 3.500h10M3 6h10M3 8.500h7" stroke="#2a2026" strokeWidth="1.100" />
          </svg>
          <span className="absolute top-[8px] left-[8px] flex h-[16px] w-[16px] items-center justify-center rounded-full border border-[#8a8a8a] bg-[#2f2a2e] text-[11px] leading-none font-semibold">
            2
          </span>
        </div>
        <div className="ml-[18px] h-10 w-px bg-[#6d696b]" />
        <div className="w-[4px]" />
      </div>
    </div>
  );
}

export default function App() {
  return (
    <div className={`relative flex h-[1440px] w-[2560px] flex-col overflow-hidden bg-[#f0f0f0] ${UI}`}>
      <GreenDefs />
      <div className="flex flex-col bg-white">
        <TitleBar />
        <MenuBar />
      </div>
      <div className="h-[1355px]">
        <div className="flex h-full flex-col">
          <div className="-mt-px">
            <MainToolbar />
          </div>
          <div className="flex flex-1">
            <ToolPalette />
            <div className="flex pt-px">
              <Workspace />
              <Docks />
            </div>
          </div>
        </div>
      </div>
      <Taskbar />
    </div>
  );
}
